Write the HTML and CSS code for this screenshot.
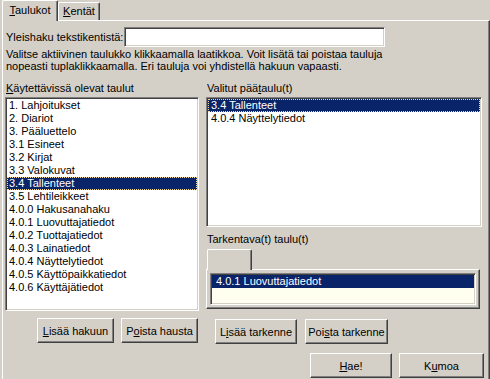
FILE: index.html
```html
<!DOCTYPE html>
<html>
<head>
  <title>Haku</title>
  <link rel="stylesheet" href="styles.css">
</head>
<body>
  <div class="tabs">
    <div class="tab active"><u>T</u>aulukot</div>
    <div class="tab"><u>K</u>entät</div>
  </div>

  <div class="panel">
    <div class="search-row">
      <label class="search-label">Yleishaku tekstikentistä:</label>
      <input class="search-input" type="text">
    </div>

    <p class="hint">Valitse aktiivinen taulukko klikkaamalla laatikkoa. Voit lisätä tai poistaa tauluja<br>nopeasti tuplaklikkaamalla. Eri tauluja voi yhdistellä hakuun vapaasti.</p>

    <div class="columns">
      <div class="col-left">
        <div class="caption"><u>K</u>äytettävissä olevat taulut</div>
        <ul class="listbox list-all">
          <li>1. Lahjoitukset</li>
          <li>2. Diariot</li>
          <li>3. Pääluettelo</li>
          <li>3.1 Esineet</li>
          <li>3.2 Kirjat</li>
          <li>3.3 Valokuvat</li>
          <li class="selected focus">3.4 Tallenteet</li>
          <li>3.5 Lehtileikkeet</li>
          <li>4.0.0 Hakusanahaku</li>
          <li>4.0.1 Luovuttajatiedot</li>
          <li>4.0.2 Tuottajatiedot</li>
          <li>4.0.3 Lainatiedot</li>
          <li>4.0.4 Näyttelytiedot</li>
          <li>4.0.5 Käyttöpaikkatiedot</li>
          <li>4.0.6 Käyttäjätiedot</li>
        </ul>
        <div class="btn-row left-buttons">
          <button class="btn w77"><u>L</u>isää hakuun</button>
          <button class="btn w77">P<u>o</u>ista hausta</button>
        </div>
      </div>

      <div class="col-right">
        <div class="caption">Valitut pää<u>t</u>aulu(t)</div>
        <ul class="listbox list-main">
          <li class="selected focus">3.4 Tallenteet</li>
          <li>4.0.4 Näyttelytiedot</li>
        </ul>

        <div class="caption sub-caption">Tarkentava(t) taulu(t)</div>
        <div class="subtab"></div>
        <div class="subpanel">
          <ul class="listbox list-sub">
            <li class="selected">4.0.1 Luovuttajatiedot</li>
          </ul>
        </div>
        <div class="btn-row right-buttons">
          <button class="btn w82">L<u>i</u>sää tarkenne</button>
          <button class="btn w83">Poi<u>s</u>ta tarkenne</button>
        </div>
      </div>
    </div>

    <div class="action-row">
      <button class="btn w82"><u>H</u>ae!</button>
      <button class="btn w85">K<u>u</u>moa</button>
    </div>
  </div>
</body>
</html>
```

FILE: styles.css
```css
body {
  margin: 0;
  background-color: #d4d0c8;
  font-family: "Liberation Sans", Arial, sans-serif;
  font-size: 11px;
  color: #000;
  overflow: hidden;
}

/* top tabs */
.tabs {
  display: flex;
  align-items: flex-end;
  height: 20px;
  padding-left: 2px;
}
.tab {
  box-sizing: border-box;
  width: 42px;
  height: 18px;
  line-height: 16px;
  text-align: center;
  border: 1px solid;
  border-color: #fff #404040 transparent #fff;
  border-bottom: none;
  border-radius: 2px 2px 0 0;
  box-shadow: inset -1px 0 #808080;
}
.tab.active {
  position: relative;
  z-index: 1;
  width: 56px;
  height: 21px;
  line-height: 18px;
  margin-bottom: -1px;
  background-color: #d4d0c8;
}

.panel {
  box-sizing: border-box;
  width: 488px;
  height: 370px;
  margin-left: 2px;
  padding: 6px 0 0 2px;
  border-top: 1px solid #fff;
  border-left: 1px solid #fff;
  border-right: 1px solid #404040;
  box-shadow: inset -1px 0 #808080;
}

.search-row { display: flex; align-items: center; height: 20px; }
.search-label { width: 119px; padding-left: 1px; box-sizing: border-box; }
.search-input {
  box-sizing: border-box;
  width: 261px;
  height: 20px;
  margin: 0;
  padding: 0 2px;
  background: #fff;
  border: 1px solid;
  border-color: #808080 #fff #fff #808080;
  box-shadow: inset 1px 1px #404040, inset -1px -1px #d4d0c8;
  font: inherit;
  outline: none;
}

.hint {
  margin: 1px 0 0 1px;
  line-height: 12px;
  white-space: nowrap;
}

.columns { display: flex; gap: 7px; margin-top: 10px; }
.col-left { width: 194px; }
.col-right { width: 276px; }
.caption { height: 13px; line-height: 13px; margin: 0 0 2px 1px; white-space: nowrap; }

/* listboxes */
.listbox {
  box-sizing: border-box;
  list-style: none;
  margin: 0;
  padding: 0;
  background: #fff;
  border: 1px solid;
  border-color: #808080 #fff #fff #808080;
  box-shadow: inset 1px 1px #404040, inset -1px -1px #d4d0c8;
  padding: 1px;
  overflow: hidden;
}
.listbox li {
  height: 13px;
  line-height: 13px;
  padding-left: 2px;
  white-space: nowrap;
}
.listbox li.selected { background-color: #0a246a; color: #fff; }
.listbox li.focus { outline: 1px dotted #f5db95; outline-offset: -1px; }
.list-all { height: 214px; }
.list-main { height: 130px; }
.list-main li { padding-left: 3px; }

.sub-caption { margin: 6px 0 3px 1px; }
.subtab {
  position: relative;
  z-index: 1;
  box-sizing: border-box;
  width: 45px;
  height: 21px;
  margin: 0 0 -1px 1px;
  background-color: #d4d0c8;
  border: 1px solid;
  border-color: #fff #404040 transparent #fff;
  border-bottom: none;
  border-radius: 2px 2px 0 0;
  box-shadow: inset -1px 0 #808080;
}
.subpanel {
  box-sizing: border-box;
  width: 274px;
  height: 40px;
  padding: 3px;
  border: 1px solid;
  border-color: #fff #404040 #404040 #fff;
  box-shadow: inset -1px -1px #808080;
}
.list-sub { height: 32px; background-color: #fffff0; }
.list-sub li { padding-left: 4px; }

/* buttons */
.btn-row { display: flex; gap: 7px; margin-top: 7px; }
.left-buttons { justify-content: flex-end; padding-right: 1px; }
.right-buttons { gap: 8px; padding-left: 9px; margin-top: 10px; }
.btn {
  box-sizing: border-box;
  height: 25px;
  margin: 0;
  padding: 0;
  background-color: #d4d0c8;
  border: 1px solid;
  border-color: #fff #404040 #404040 #fff;
  box-shadow: inset -1px -1px #808080;
  font: inherit;
  color: #000;
}
.w77 { width: 77px; }
.w82 { width: 82px; }
.w83 { width: 83px; }
.w85 { width: 85px; }

.action-row {
  display: flex;
  justify-content: flex-end;
  gap: 7px;
  margin-top: 9px;
  padding-right: 5px;
}
```
